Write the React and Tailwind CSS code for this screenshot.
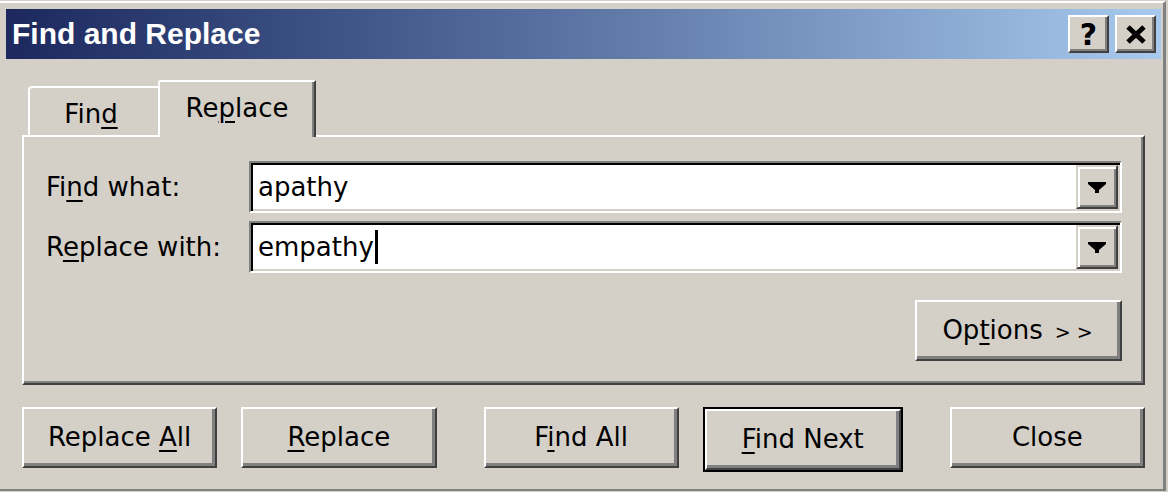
import React from "react";

const FONT = "font-['DejaVu_Sans',sans-serif]";

function U({ children }) {
  return (
    <span className="underline decoration-[2px] underline-offset-[4px]">{children}</span>
  );
}

function Btn({ children, className = "" }) {
  return (
    <div
      className={`w-[196px] h-[61px] bg-[#d4d0c8] border-2 border-t-white border-l-white border-r-[#404040] border-b-[#404040] shadow-[inset_-3px_-3px_0_#808080] flex items-center justify-center text-[26px] text-black ${className}`}
    >
      {children}
    </div>
  );
}

function DropBtn() {
  return (
    <div className="w-[42px] h-full bg-[#d4d0c8] border-2 border-t-[#d4d0c8] border-l-[#d4d0c8] border-r-[#404040] border-b-[#404040] shadow-[inset_2px_2px_0_#fff,inset_-2px_-2px_0_#808080] flex items-center justify-center">
      <svg width="18" height="11" viewBox="0 0 18 11">
        <polygon points="0,0 18,0 18,2 11,8 11,11 7,11 7,8 0,2" fill="#000" />
      </svg>
    </div>
  );
}

function Combo({ children }) {
  return (
    <div className="w-[873px] h-[52px] border-2 border-t-[#808080] border-l-[#808080] border-r-white border-b-white shadow-[inset_2px_2px_0_#000,inset_-2px_-2px_0_#d4d0c8] bg-white p-[2px]">
      <div className="flex h-full items-stretch">
        <div className="flex-1 flex items-center pl-[5px] text-[26px] text-black">{children}</div>
        <DropBtn />
      </div>
    </div>
  );
}

function TitleBtn({ children }) {
  return (
    <div className="w-[41px] h-[38px] bg-[#d4d0c8] border-2 border-t-white border-l-white border-r-[#404040] border-b-[#404040] shadow-[inset_-2px_-2px_0_#808080] flex items-center justify-center">
      {children}
    </div>
  );
}

export default function App() {
  return (
    <div className={`w-[1168px] h-[492px] bg-[#d4d0c8] pt-[1px] ${FONT}`}>
      <div className="w-[1166px] h-[490px] border-t-2 border-t-white border-r-[3px] border-r-[#808080] border-b-2 border-b-[#808080] pl-[6px] pr-[2px] pt-[6px] flex flex-col">
        {/* Title bar */}
        <div className="h-[50px] bg-gradient-to-r from-[#1c285e] to-[#a8caee] flex items-center justify-between pl-[6px] pr-[5px]">
          <span className="font-['Liberation_Sans',Arial,sans-serif] font-bold text-[30px] text-white leading-none">
            Find and Replace
          </span>
          <div className="flex gap-[6px]">
            <TitleBtn>
              <span className="font-['DejaVu_Sans',sans-serif] font-bold text-[30px] leading-none text-black mt-[2px]">?</span>
            </TitleBtn>
            <TitleBtn>
              <svg width="22" height="21" viewBox="0 0 22 21">
                <line x1="3" y1="3" x2="19" y2="18" stroke="#000" strokeWidth="5" />
                <line x1="19" y1="3" x2="3" y2="18" stroke="#000" strokeWidth="5" />
              </svg>
            </TitleBtn>
          </div>
        </div>

        {/* Body */}
        <div className="px-[16px] flex flex-col">
          {/* Tabs */}
          <div className="mt-[21px] h-[55px] flex items-end pl-[6px]">
            <div className="w-[130px] h-[49px] border-t-2 border-l-2 border-white rounded-tl-[4px] flex items-center justify-center pt-[6px] pr-[6px] text-[26px] text-black">
              <span>
                Fin<U>d</U>
              </span>
            </div>
            <div className="relative z-10 -mb-[2px] w-[158px] h-[57px] bg-[#d4d0c8] border-t-2 border-l-2 border-white border-r-2 border-r-[#404040] rounded-tl-[3px] shadow-[inset_-2px_0_0_#808080] flex items-center justify-center pb-[2px] text-[26px] text-black">
              <span>
                Re<U>p</U>lace
              </span>
            </div>
          </div>

          {/* Panel */}
          <div className="h-[250px] border-2 border-t-white border-l-white border-r-[#404040] border-b-[#404040] shadow-[inset_-2px_-2px_0_#808080] pl-[22px] pr-[21px] pt-[24px] flex flex-col">
            <div className="flex items-center">
              <div className="w-[203px] text-[26px] text-black">
                Fi<U>n</U>d what:
              </div>
              <Combo>apathy</Combo>
            </div>
            <div className="flex items-center mt-[8px]">
              <div className="w-[203px] text-[26px] text-black">
                R<U>e</U>place with:
              </div>
              <Combo>
                <span>empathy</span>
                <span className="inline-block w-[3px] h-[34px] bg-black ml-[1px]" />
              </Combo>
            </div>
            <div className="mt-[27px] flex justify-end">
              <Btn className="w-[207px] h-[60px]">
                <span className="pl-[4px]">
                  Op<U>t</U>ions
                  <span className="text-[19px] tracking-[6px] ml-[12px]">&gt;&gt;</span>
                </span>
              </Btn>
            </div>
          </div>

          {/* Buttons */}
          <div className="mt-[22px] flex">
            <Btn>
              <span>
                Replace <U>A</U>ll
              </span>
            </Btn>
            <Btn className="ml-[24px]">
              <span>
                <U>R</U>eplace
              </span>
            </Btn>
            <Btn className="ml-[47px]">
              <span>
                F<U>i</U>nd All
              </span>
            </Btn>
            <div className="ml-[24px] border-2 border-black">
              <Btn className="w-[192px] h-[57px]">
                <span>
                  <U>F</U>ind Next
                </span>
              </Btn>
            </div>
            <Btn className="ml-[47px]">Close</Btn>
          </div>
        </div>
      </div>
    </div>
  );
}
